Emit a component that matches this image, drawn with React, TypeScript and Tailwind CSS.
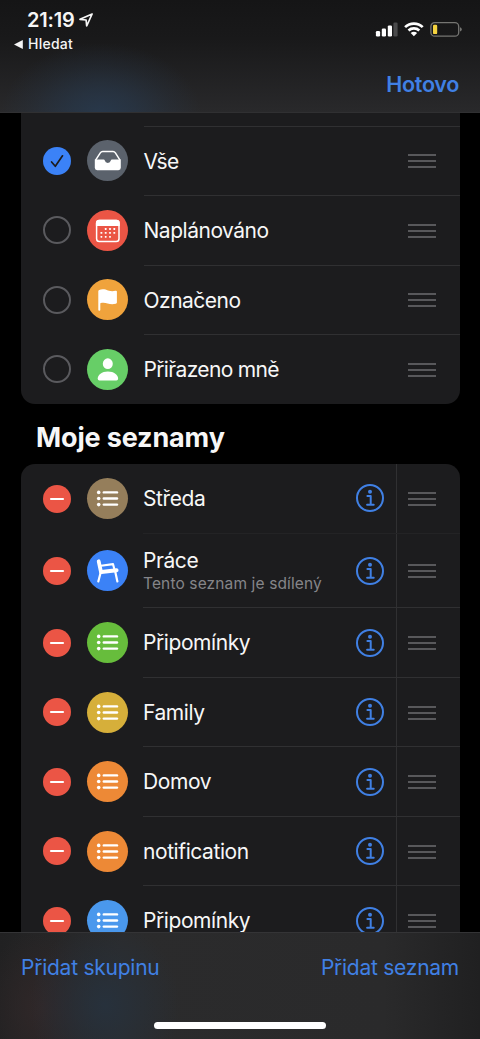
import { ReactNode } from 'react';

const ListGlyph = () => (
  <svg viewBox="0 0 41 41" className="size-[41px]" fill="#fff" stroke="#fff" strokeLinecap="round">
    {[14.4, 20.5, 26.6].map((y) => (
      <g key={y}>
        <circle cx="11.7" cy={y} r="1.8" stroke="none" />
        <path d={`M16.8 ${y}H30`} strokeWidth="2.4" />
      </g>
    ))}
  </svg>
);

const TrayGlyph = () => (
  <svg viewBox="0 0 41 41" className="size-[41px]">
    <path
      d="M8.6 20.2 13.3 12.9Q14.2 11.6 15.7 11.6H26Q27.5 11.6 28.4 12.9L33 20.2"
      fill="none"
      stroke="#fff"
      strokeWidth="1.5"
      strokeLinejoin="round"
    />
    <path
      d="M7.8 19.6H16.6Q17.6 19.6 17.8 20.6Q18.3 23 20.8 23T23.8 20.6Q24 19.6 25 19.6H33.8V27.8Q33.8 30.2 31.4 30.2H10.2Q7.8 30.2 7.8 27.8Z"
      fill="#fff"
    />
  </svg>
);

const CALENDAR_DOTS = [
  [18.7, 19], [23, 19], [27.3, 19],
  [14.4, 22.9], [18.7, 22.9], [23, 22.9], [27.3, 22.9],
  [14.4, 26.8], [18.7, 26.8], [23, 26.8],
];

const CalendarGlyph = () => (
  <svg viewBox="0 0 41 41" className="size-[41px]" fill="#fff">
    <rect x="9.6" y="10.4" width="22.4" height="21.2" rx="2.8" fill="none" stroke="#fff" strokeWidth="1.5" />
    <path d="M8.9 16V13Q8.9 9.7 12.2 9.7H29.4Q32.7 9.7 32.7 13V16Z" />
    {CALENDAR_DOTS.map(([x, y]) => (
      <rect key={`${x}-${y}`} x={x - 0.9} y={y - 0.9} width="1.8" height="1.8" rx="0.4" />
    ))}
  </svg>
);

const FlagGlyph = () => (
  <svg viewBox="0 0 41 41" className="size-[41px]" fill="#fff">
    <path d="M11.3 12.2Q11.3 11.4 12.2 11C15.5 9.7 18.6 10.6 21 11.4C23.8 12.3 26 12.3 28.4 11.8Q29.9 11.5 29.9 12.6V23.4Q29.9 24.4 28.8 24.7C25.7 25.5 23.3 25.2 20.6 24.4C18 23.6 15.5 23.5 13.3 24.2V31Q13.3 31.8 12.3 31.8T11.3 31Z" />
  </svg>
);

const PersonGlyph = () => (
  <svg viewBox="0 0 41 41" className="size-[41px] fill-white">
    <ellipse cx="20.8" cy="14.7" rx="5" ry="5.4" />
    <path d="M10.7 29.8C10.7 26 14.8 22.6 20.9 22.6S31.1 26 31.1 29.8Q31.1 31.4 29.4 31.4H12.4Q10.7 31.4 10.7 29.8Z" />
  </svg>
);

const ChairGlyph = () => (
  <svg viewBox="0 0 41 41" className="size-[41px]" fill="none" stroke="#fff" strokeLinecap="round" strokeLinejoin="round">
    <path d="M11.7 11.3 14 22" strokeWidth="3.8" />
    <path d="M14.3 22 29.6 20.2" strokeWidth="3.9" />
    <path d="M14 15.8 26 14.1 27.4 19.2" strokeWidth="2.1" />
    <path d="M13.4 23.5 11.3 31.5M28.2 21.5 30.4 31.5" strokeWidth="2.2" />
  </svg>
);

const MinusButton = () => (
  <span className="mt-px size-7 shrink-0 rounded-full bg-[#eb5545]">
    <svg viewBox="0 0 28 28" className="size-7" stroke="#fff" strokeWidth="2.2" strokeLinecap="round">
      <path d="M8 14H20" />
    </svg>
  </span>
);

const Check = ({ on }: { on?: boolean }) =>
  on ? (
    <span className="mt-px size-7 shrink-0 rounded-full bg-[#3b82f7]">
      <svg viewBox="0 0 28 28" className="size-7" fill="none" stroke="#1c1c1e" strokeWidth="1.7" strokeLinecap="round" strokeLinejoin="round">
        <path d="M8.6 15 12.3 19.3 19.5 8.8" />
      </svg>
    </span>
  ) : (
    <span className="mt-px size-7 shrink-0 rounded-full border-2 border-[#5a5a5e]" />
  );

const InfoIcon = () => (
  <svg viewBox="0 0 28 28" className="size-7 shrink-0" fill="none" stroke="#4080e4" strokeLinecap="round" strokeLinejoin="round">
    <circle cx="14" cy="14" r="13" strokeWidth="2" />
    <circle cx="14" cy="7.8" r="2" fill="#4080e4" stroke="none" />
    <path d="M11.4 12.1H14.7V20.6M11.1 20.7H17.7" strokeWidth="2" />
  </svg>
);

const Handle = () => (
  <span className="mt-px flex w-7 shrink-0 flex-col gap-1">
    <span className="h-0.5 bg-[#58585b]" />
    <span className="h-0.5 bg-[#58585b]" />
    <span className="h-0.5 bg-[#58585b]" />
  </span>
);

const Bubble = ({ color, children }: { color: string; children: ReactNode }) => (
  <span className={`mt-px ml-4 size-[41px] shrink-0 rounded-full ${color}`}>{children}</span>
);

const SMART_LISTS = [
  { name: 'Vše', color: 'bg-[#5b626c]', icon: <TrayGlyph />, on: true, tracking: 'tracking-[-0.5px]' },
  { name: 'Naplánováno', color: 'bg-[#eb5545]', icon: <CalendarGlyph />, tracking: 'tracking-[-0.48px]' },
  { name: 'Označeno', color: 'bg-[#f0a33c]', icon: <FlagGlyph />, tracking: 'tracking-[-0.5px]' },
  { name: 'Přiřazeno mně', color: 'bg-[#67ce67]', icon: <PersonGlyph />, tracking: 'tracking-[-0.65px]' },
];

const LISTS = [
  { id: 1, name: 'Středa', color: 'bg-[#957e5b]', row: 'h-[69.25px]', line: '' },
  { id: 2, name: 'Práce', color: 'bg-[#3b82f7]', row: 'h-[74.5px]', line: 'border-t border-[#232325]', note: 'Tento seznam je sdílený', icon: <ChairGlyph /> },
  { id: 3, name: 'Připomínky', color: 'bg-[#67bd3c]', row: 'h-[69.5px]', line: 'border-t border-[#303032]' },
  { id: 4, name: 'Family', color: 'bg-[#d6af3a]', row: 'h-[69.5px]', line: 'border-t border-[#303032]' },
  { id: 5, name: 'Domov', color: 'bg-[#ed8936]', row: 'h-[69.5px]', line: 'border-t border-[#303032]' },
  { id: 6, name: 'notification', color: 'bg-[#ed8936]', row: 'h-[69.5px]', line: 'border-t border-[#303032]' },
  { id: 7, name: 'Připomínky', color: 'bg-[#4a98ed]', row: 'h-[69.5px]', line: 'border-t border-[#303032]' },
];

const StatusBar = () => (
  <div className="flex justify-between">
    <div className="pt-[9px] text-[#f5f5f5]">
      <div className="flex items-center gap-1 pl-[27px]">
        <span className="text-[20px] leading-[22px] font-semibold tracking-[-0.2px]">21:19</span>
        <svg viewBox="0 0 14 14" className="size-3.5" fill="none" stroke="currentColor" strokeWidth="1.7" strokeLinejoin="round">
          <path d="M13.1 1 1 6.3 7.1 7 7.7 13Z" />
        </svg>
      </div>
      <div className="mt-[3px] flex items-center gap-[5px] pl-3.5">
        <svg viewBox="0 0 9 9" className="size-[9px]" fill="currentColor">
          <path d="M0 4.5 8.8 0V9Z" />
        </svg>
        <span className="text-[14px] leading-[20px] font-medium tracking-[0.25px]">Hledat</span>
      </div>
    </div>
    <div className="flex items-start gap-[6px] pt-[21px] pr-[18px]">
      <svg viewBox="0 0 23 16" className="h-4 w-[23px]" fill="#fff">
        <rect x="0.9" y="10" width="4.2" height="5.4" rx="1.2" />
        <rect x="6.8" y="7.6" width="4.2" height="7.8" rx="1.2" />
        <rect x="12.8" y="4.4" width="4.2" height="11" rx="1.2" />
        <rect x="18.4" y="1.6" width="4.2" height="13.8" rx="1.2" fill="#4a4a4b" />
      </svg>
      <svg viewBox="0 0 20 16" className="h-4 w-5" fill="none" stroke="#fff" strokeWidth="2.7">
        <path d="M1.1 6.1A12.7 12.7 0 0 1 18.7 6.1" />
        <path d="M4.5 9.5A7.9 7.9 0 0 1 15.3 9.5" />
        <path d="M9.9 15.3 6.7 12A4.6 4.6 0 0 1 13.1 12Z" fill="#fff" stroke="none" />
      </svg>
      <svg viewBox="0 0 32 16" className="h-4 w-8">
        <rect x="0.9" y="1.6" width="27.8" height="13.6" rx="3.8" fill="none" stroke="#757572" strokeWidth="1.3" />
        <rect x="3" y="3.7" width="4.2" height="9.4" rx="1.2" fill="#f5d33f" />
        <path d="M30 6.2Q31.8 6.8 31.8 8.4T30 10.6Z" fill="#757572" />
      </svg>
    </div>
  </div>
);

export default function App() {
  return (
    <div className="flex h-[1039px] w-[480px] flex-col overflow-hidden bg-black font-['Inter','Noto_Sans',sans-serif] text-[#f7f7f7]">
      <header className="h-[113px] shrink-0 border-b border-[#303032] bg-[radial-gradient(100px_72px_at_101px_115px,#28394df0_0%,#28394da0_35%,#28394d40_70%,#28394d00_100%),linear-gradient(#151516,#19191a_35%,#29292b)]">
        <StatusBar />
        <div className="mt-4 pr-[21px] text-right text-[21.5px] leading-7 font-semibold tracking-[-0.3px] text-[#4080e4]">Hotovo</div>
      </header>

      <main className="flex min-h-0 flex-1 flex-col overflow-hidden pr-5 pl-[21px]">
        <section className="shrink-0 overflow-hidden rounded-b-[14px] bg-[#1c1c1e]">
          <div className="h-[12.5px]" />
          {SMART_LISTS.map((item) => (
            <div key={item.name} className="flex h-[69.5px] items-center pl-[21.5px]">
              <Check on={item.on} />
              <Bubble color={item.color}>{item.icon}</Bubble>
              <div className="ml-4 flex h-full flex-1 items-center border-t border-[#303032] pr-6">
                <span className={`flex-1 pt-[1.5px] text-[21px] ${item.tracking}`}>{item.name}</span>
                <Handle />
              </div>
            </div>
          ))}
        </section>

        <h2 className="mt-[17px] mb-[9px] shrink-0 pl-[15px] text-[27px] leading-[34px] font-bold tracking-[-0.15px]">Moje seznamy</h2>

        <section className="shrink-0 overflow-hidden rounded-t-[14px] bg-[#1c1c1e]">
          {LISTS.map((list) => (
            <div key={list.id} className={`flex items-center pl-[21.5px] ${list.row}`}>
              <MinusButton />
              <Bubble color={list.color}>{list.icon ?? <ListGlyph />}</Bubble>
              <div className={`ml-[15.5px] flex h-full flex-1 items-center ${list.line}`}>
                <div className={`flex-1 ${list.note ? '' : 'pt-[1.5px]'}`}>
                  <p className="text-[21px] leading-[26px] tracking-[-0.42px]">{list.name}</p>
                  {list.note && <p className="text-[15.5px] leading-[19px] tracking-[0.13px] text-[#858589]">{list.note}</p>}
                </div>
                <InfoIcon />
                <div className="ml-3 flex h-full items-center border-l border-[#303032] pr-6 pl-[11.5px]">
                  <Handle />
                </div>
              </div>
            </div>
          ))}
        </section>
      </main>

      <footer className="flex h-[107px] shrink-0 flex-col items-center justify-between border-t border-[#343436] bg-[radial-gradient(75px_85px_at_105px_72px,#27313c_0%,#27313c00_100%),radial-gradient(60px_80px_at_42px_75px,#302728_0%,#30272800_100%),linear-gradient(90deg,#212122,#2b2b2c_25%,#2a2a2b_80%,#202021)] pb-[10px]">
        <div className="flex w-full justify-between pt-[21px] pr-[21px] pl-[21px] text-[21px] leading-7 tracking-[-0.25px] text-[#4080e4]">
          <span>Přidat skupinu</span>
          <span>Přidat seznam</span>
        </div>
        <div className="h-[7px] w-[172px] rounded-full bg-white" />
      </footer>
    </div>
  );
}
